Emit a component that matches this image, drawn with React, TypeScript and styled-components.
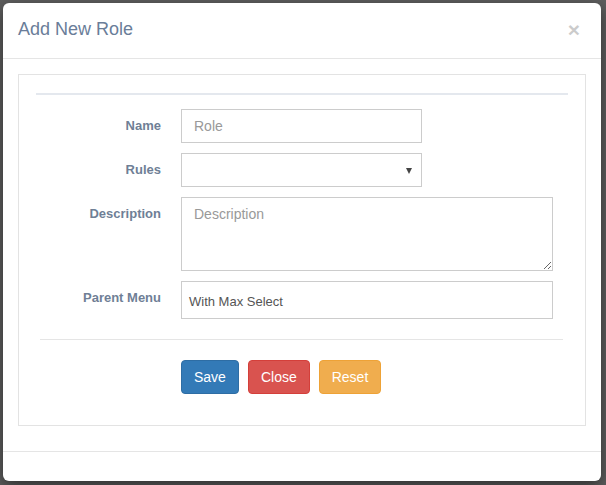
import styled, { createGlobalStyle } from "styled-components";

const GlobalStyle = createGlobalStyle`
  html, body {
    margin: 0;
    padding: 0;
    background: #5e5e5e;
    font-family: "Liberation Sans", Arial, sans-serif;
  }
  * {
    box-sizing: border-box;
  }
`;

const Page = styled.div`
  padding: 3px 5px 4px 3px;
  height: 485px;
`;

const Modal = styled.div`
  display: flex;
  flex-direction: column;
  height: 478px;
  background: #ffffff;
  border-radius: 6px;
  box-shadow: 0 5px 15px rgba(0, 0, 0, 0.5);
  overflow: hidden;
`;

const Header = styled.div`
  display: flex;
  justify-content: space-between;
  align-items: flex-start;
  padding: 14px 15px 16px 15px;
  border-bottom: 1px solid #e5e5e5;
`;

const Title = styled.h4`
  margin: 0;
  font-size: 18px;
  font-weight: normal;
  line-height: 25px;
  color: #6a7d99;
`;

const CloseX = styled.button`
  border: 0;
  background: transparent;
  padding: 0;
  margin: 0 6px 0 0;
  font-family: "Liberation Sans", Arial, sans-serif;
  font-size: 21px;
  font-weight: bold;
  line-height: 25px;
  color: #000;
  opacity: 0.2;
  cursor: pointer;
`;

const Body = styled.div`
  flex: 1;
  padding: 15px 15px 25px 15px;
`;

const Panel = styled.div`
  border: 1px solid #e3e3e3;
  padding: 18px 17px 31px 17px;
`;

const TopRule = styled.div`
  border-top: 2px solid #e4e8ee;
  margin-bottom: 14px;
`;

const Row = styled.div`
  display: grid;
  grid-template-columns: 125px 1fr;
  column-gap: 20px;
  margin-bottom: 10px;
`;

const Label = styled.label`
  padding-top: 7px;
  text-align: right;
  font-size: 13px;
  font-weight: bold;
  line-height: 20px;
  color: #6f7f96;
`;

const Input = styled.input<{ $width: number }>`
  width: ${(p) => p.$width}px;
  height: 34px;
  padding: 6px 12px;
  border: 1px solid #cccccc;
  border-radius: 0;
  font-family: "Liberation Sans", Arial, sans-serif;
  font-size: 14px;
  color: #555;
  outline: none;

  &::placeholder {
    color: #999;
  }
`;

const SelectWrap = styled.div`
  position: relative;
  width: 241px;
`;

const Select = styled.select`
  appearance: none;
  width: 100%;
  height: 34px;
  padding: 6px 12px;
  border: 1px solid #cccccc;
  border-radius: 0;
  background: #fff;
  font-family: "Liberation Sans", Arial, sans-serif;
  font-size: 14px;
  color: #555;
  outline: none;
`;

const Caret = styled.span`
  position: absolute;
  right: 10px;
  top: 15px;
  width: 0;
  height: 0;
  border-left: 3.5px solid transparent;
  border-right: 3.5px solid transparent;
  border-top: 6px solid #444;
  pointer-events: none;
`;

const TextArea = styled.textarea`
  width: 372px;
  height: 74px;
  padding: 6px 12px;
  border: 1px solid #cccccc;
  border-radius: 0;
  font-family: "Liberation Sans", Arial, sans-serif;
  font-size: 14px;
  line-height: 20px;
  color: #555;
  outline: none;

  &::placeholder {
    color: #999;
  }
`;

const MultiBox = styled.div`
  width: 372px;
  height: 38px;
  padding: 12px 7px 0 7px;
  border: 1px solid #cccccc;
  font-size: 13px;
  line-height: 16px;
  color: #555;
`;

const Separator = styled.div`
  margin: 20px 5px 20px 4px;
  border-top: 1px solid #e5e5e5;
`;

const Actions = styled.div`
  display: flex;
  gap: 9px;
  padding-left: 145px;
`;

const tones = {
  primary: { bg: "#337ab7", border: "#2e6da4" },
  danger: { bg: "#d9534f", border: "#d43f3a" },
  warning: { bg: "#f0ad4e", border: "#eea236" },
};

const Button = styled.button<{ $tone: keyof typeof tones }>`
  height: 34px;
  padding: 6px 12px;
  border: 1px solid ${(p) => tones[p.$tone].border};
  border-radius: 4px;
  background: ${(p) => tones[p.$tone].bg};
  color: #fff;
  font-family: "Liberation Sans", Arial, sans-serif;
  font-size: 14px;
  line-height: 20px;
  cursor: pointer;
`;

const Footer = styled.div`
  height: 30px;
  border-top: 1px solid #e5e5e5;
`;

export default function App() {
  return (
    <>
      <GlobalStyle />
      <Page>
        <Modal>
          <Header>
            <Title>Add New Role</Title>
            <CloseX aria-label="Close">×</CloseX>
          </Header>
          <Body>
            <Panel>
              <TopRule />
              <Row>
                <Label htmlFor="role-name">Name</Label>
                <Input id="role-name" $width={241} placeholder="Role" />
              </Row>
              <Row>
                <Label htmlFor="role-rules">Rules</Label>
                <SelectWrap>
                  <Select id="role-rules" defaultValue="">
                    <option value=""></option>
                  </Select>
                  <Caret />
                </SelectWrap>
              </Row>
              <Row>
                <Label htmlFor="role-desc">Description</Label>
                <TextArea id="role-desc" placeholder="Description" />
              </Row>
              <Row>
                <Label>Parent Menu</Label>
                <MultiBox>With Max Select</MultiBox>
              </Row>
              <Separator />
              <Actions>
                <Button $tone="primary">Save</Button>
                <Button $tone="danger">Close</Button>
                <Button $tone="warning">Reset</Button>
              </Actions>
            </Panel>
          </Body>
          <Footer />
        </Modal>
      </Page>
    </>
  );
}
